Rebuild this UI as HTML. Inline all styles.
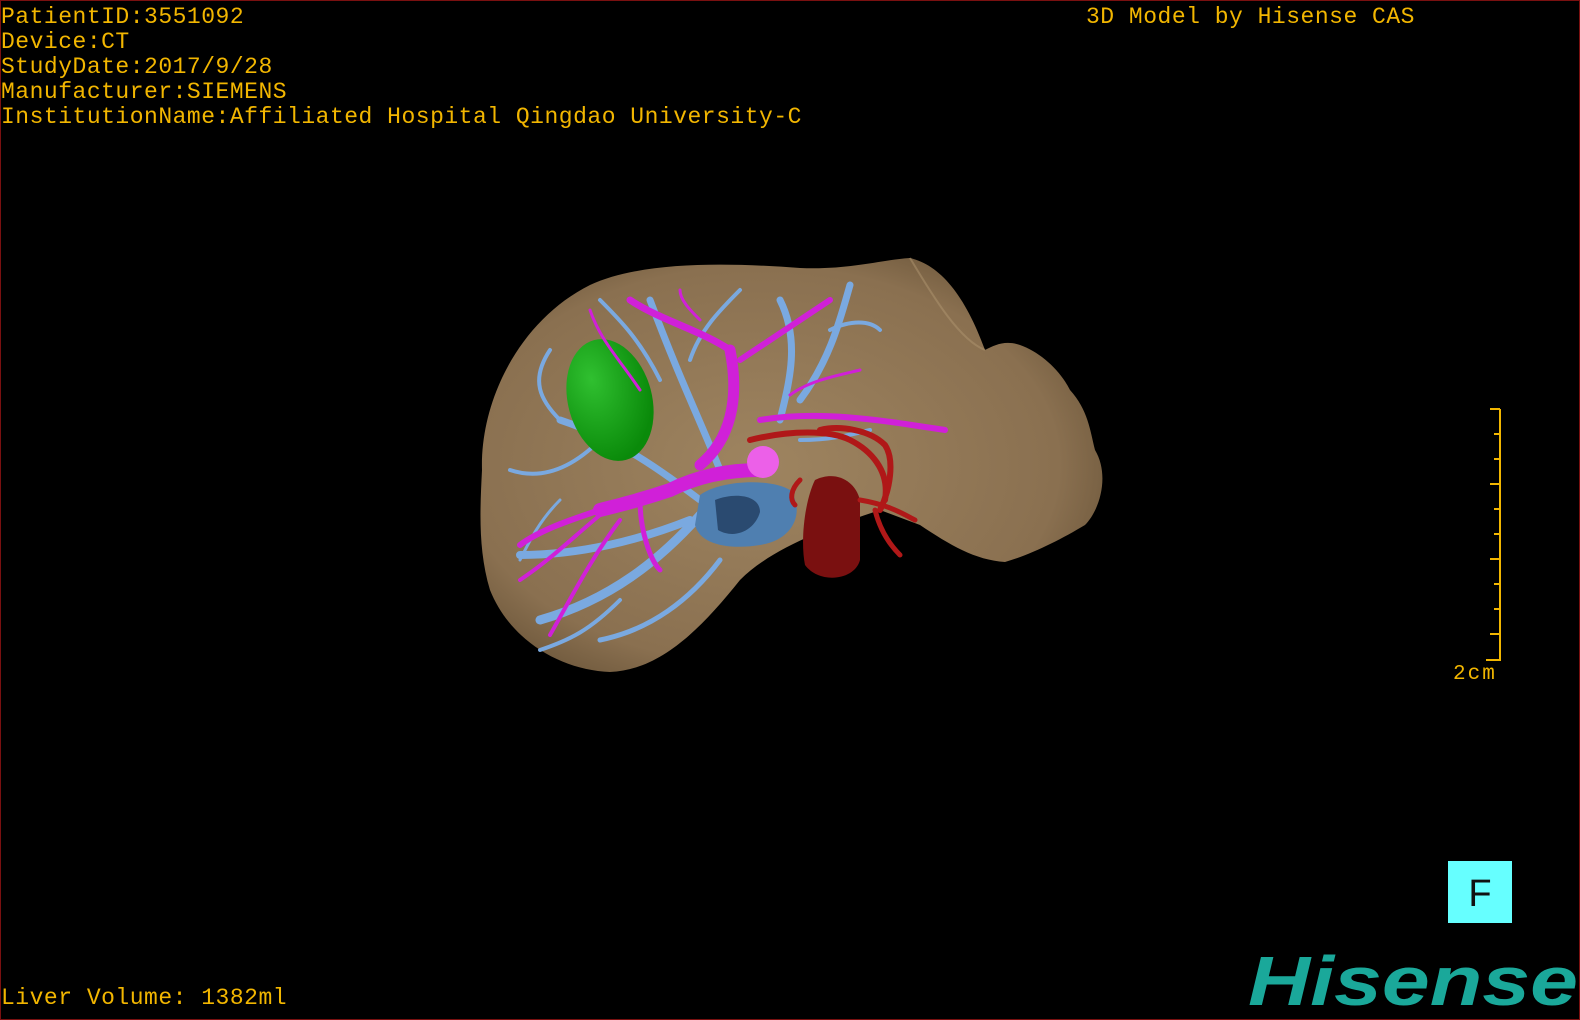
<!DOCTYPE html>
<html><head><meta charset="utf-8"><style>
html,body{margin:0;padding:0;background:#000;width:1580px;height:1020px;overflow:hidden}
.frame{position:absolute;left:0;top:0;width:1578px;height:1018px;border:1px solid #7a1010;box-sizing:content-box}
.t{position:absolute;color:#f2b600;font-family:"Liberation Mono",monospace;font-size:23px;line-height:25px;white-space:pre;letter-spacing:0.5px}
</style></head><body>
<div class="frame"></div>
<div class="t" style="left:1px;top:5px">PatientID:3551092
Device:CT
StudyDate:2017/9/28
Manufacturer:SIEMENS
InstitutionName:Affiliated Hospital Qingdao University-C</div>
<div class="t" style="left:1086px;top:5px">3D Model by Hisense CAS</div>
<div class="t" style="left:1px;top:986px">Liver Volume: 1382ml</div>
<div class="t" style="left:1453px;top:662px;font-size:21px;letter-spacing:2px">2cm</div>
<svg width="1580" height="1020" style="position:absolute;left:0;top:0">
<defs>
<radialGradient id="lg" cx="0.45" cy="0.5" r="0.6"><stop offset="0" stop-color="#9e8460"/><stop offset="0.8" stop-color="#8a7050"/><stop offset="1" stop-color="#6e583c"/></radialGradient>
<radialGradient id="gg" cx="0.35" cy="0.3" r="0.7"><stop offset="0" stop-color="#30c030"/><stop offset="1" stop-color="#0a8a0a"/></radialGradient>
</defs>
<g stroke="#f2b600" stroke-width="2" fill="none">
<path d="M1500 409 V660 H1486"/>
<path d="M1490 409H1500M1494 434H1500M1494 459H1500M1490 484H1500M1494 509H1500M1494 534H1500M1490 559H1500M1494 584H1500M1494 609H1500M1490 634H1500"/>
</g>
<path fill="url(#lg)" d="M482 470 C480 400 520 320 590 285 C640 262 720 262 800 268 C850 270 880 260 910 258 C940 265 965 295 985 350 C995 345 1005 340 1020 345 C1040 352 1060 370 1070 390 C1088 410 1090 430 1095 450 C1110 475 1100 510 1085 525 C1060 540 1030 555 1005 562 C975 560 950 545 920 525 L880 510 C820 530 770 550 740 580 C700 630 660 670 610 672 C560 670 510 640 490 590 C478 550 480 510 482 470Z"/>
<path fill="none" stroke="#b09670" stroke-width="2" opacity="0.5" d="M910 258 C935 300 960 340 985 350"/>
<g stroke="#7aa9e0" stroke-linecap="round" fill="none">
<path stroke-width="9" d="M700 515 C660 560 610 600 540 620"/>
<path stroke-width="8" d="M690 520 C640 540 580 555 520 555"/>
<path stroke-width="7" d="M700 500 C660 470 620 440 560 420"/>
<path stroke-width="7" d="M720 470 C700 420 680 380 650 300"/>
<path stroke-width="7" d="M780 420 C790 380 800 340 780 300"/>
<path stroke-width="7" d="M800 400 C830 360 840 320 850 285"/>
<path stroke-width="5" d="M720 560 C690 600 650 630 600 640"/>
<path stroke-width="4" d="M560 420 C540 400 530 380 550 350"/>
<path stroke-width="4" d="M600 440 C570 470 540 480 510 470"/>
<path stroke-width="4" d="M660 380 C640 340 620 320 600 300"/>
<path stroke-width="4" d="M690 360 C700 330 720 310 740 290"/>
<path stroke-width="4" d="M620 600 C590 630 570 640 540 650"/>
<path stroke-width="4" d="M830 330 C850 320 870 320 880 330"/>
<path stroke-width="4" d="M800 440 C830 440 850 435 870 430"/>
<path stroke-width="3" d="M560 500 C540 520 530 540 520 560"/>
<path stroke-width="3" d="M580 360 C600 370 620 380 640 390"/>
</g>
<path fill="#4f7fb0" d="M700 495 C720 480 770 478 790 490 C805 510 795 540 760 545 C730 550 700 545 695 525Z"/>
<path fill="#2a4a70" d="M715 500 C735 492 760 495 760 512 C755 530 735 540 718 530Z"/>
<ellipse cx="610" cy="400" rx="42" ry="62" transform="rotate(-15 610 400)" fill="url(#gg)"/>
<g stroke="#d020d8" stroke-linecap="round" fill="none">
<path stroke-width="14" d="M760 470 C730 470 700 475 670 490 C640 500 620 505 600 510"/>
<path stroke-width="11" d="M700 465 C730 440 740 400 730 350"/>
<path stroke-width="7" d="M730 350 C700 330 660 320 630 300"/>
<path stroke-width="6" d="M740 360 C770 340 800 320 830 300"/>
<path stroke-width="6" d="M760 420 C820 410 880 420 945 430"/>
<path stroke-width="6" d="M600 510 C570 520 540 530 520 545"/>
<path stroke-width="5" d="M640 500 C640 530 650 560 660 570"/>
<path stroke-width="4" d="M620 520 C590 560 570 600 550 635"/>
<path stroke-width="4" d="M600 515 C570 540 550 560 520 580"/>
<path stroke-width="3" d="M640 390 C620 360 600 340 590 310"/>
<path stroke-width="3" d="M700 320 C690 310 680 300 680 290"/>
<path stroke-width="3" d="M790 395 C810 380 840 375 860 370"/>
</g>
<circle cx="763" cy="462" r="16" fill="#ec60e8"/>
<path fill="#7a1010" d="M815 480 C835 470 855 480 860 500 L860 560 C855 580 820 585 805 565 C800 540 805 500 815 480Z"/>
<g stroke="#b01818" stroke-linecap="round" fill="none">
<path stroke-width="6" d="M750 440 C790 430 830 430 850 440 C870 450 890 470 885 500"/>
<path stroke-width="6" d="M820 430 C840 425 870 430 885 445 C895 460 890 490 880 510"/>
<path stroke-width="5" d="M860 500 C890 505 905 515 915 520"/>
<path stroke-width="5" d="M875 510 C880 530 890 545 900 555"/>
<path stroke-width="5" d="M800 480 C790 490 790 500 795 505"/>
</g>
<rect x="1448" y="861" width="64" height="62" fill="#66ffff"/>
<text x="1480" y="906" text-anchor="middle" font-family="Liberation Sans,sans-serif" font-size="38" fill="#111">F</text>
<text x="1248" y="1005" font-family="Liberation Sans,sans-serif" font-weight="bold" font-style="italic" font-size="70" fill="#1aa89a" textLength="330" lengthAdjust="spacingAndGlyphs">Hisense</text>
</svg>
</body></html>
